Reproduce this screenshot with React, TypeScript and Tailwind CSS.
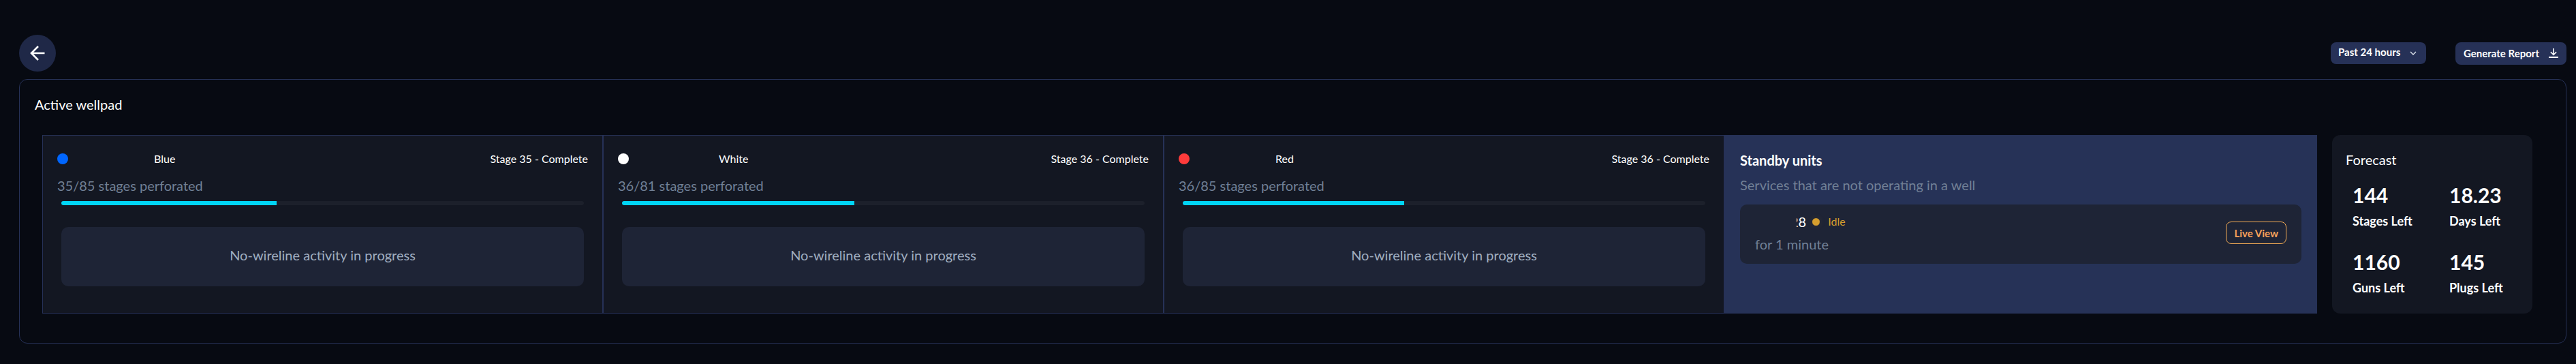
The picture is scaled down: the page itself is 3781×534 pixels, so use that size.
import { useState } from 'react';

const wells = [
  { name: "Blue", dot: "bg-[#0066ff]", nameGap: "ml-[126px]", stage: 35, done: 35, total: 85 },
  { name: "White", dot: "bg-white", nameGap: "ml-[132px]", stage: 36, done: 36, total: 81 },
  { name: "Red", dot: "bg-[#ff3b3b]", nameGap: "ml-[126px]", stage: 36, done: 36, total: 85 },
];

const forecast = [
  { value: "144", label: "Stages Left" },
  { value: "18.23", label: "Days Left" },
  { value: "1160", label: "Guns Left" },
  { value: "145", label: "Plugs Left" },
];

function BackButton() {
  return (
    <button
      type="button"
      aria-label="Back"
      className="flex h-[54px] w-[54px] items-center justify-center rounded-full bg-[#1f2847]"
    >
      <svg width="22" height="22" viewBox="0 0 22 22" fill="none" stroke="#fff" strokeWidth="2.6">
        <path d="M21.5 11H2M12 1L2 11l10 10" />
      </svg>
    </button>
  );
}

function RangeSelect() {
  const [range, setRange] = useState("24");

  return (
    <div className="relative">
      <select
        aria-label="Time range"
        value={range}
        onChange={(e) => setRange(e.target.value)}
        className="block h-8 w-[140px] appearance-none rounded-lg bg-[#263157] pb-1 pl-[11px] text-[15px] leading-6 font-bold text-white"
      >
        <option value="24">Past 24 hours</option>
        <option value="48">Past 48 hours</option>
        <option value="168">Past 7 days</option>
      </select>
      <svg
        className="pointer-events-none absolute top-3 right-3.5"
        width="10"
        height="8"
        viewBox="0 0 10 8"
        fill="none"
        stroke="#e2e8f0"
        strokeWidth="1.3"
      >
        <path d="M1 2l4 4 4-4" />
      </svg>
    </div>
  );
}

function ReportButton() {
  return (
    <button
      type="button"
      className="flex h-[33px] items-center gap-3.5 rounded-lg bg-[#263157] px-3 text-[15px] leading-6 font-bold text-white"
    >
      Generate Report
      <svg width="14" height="14" viewBox="0 0 14 14" fill="none" stroke="#fff">
        <path d="M7 0v9M2.8 5.2L7 9.4l4.2-4.2" strokeWidth="1.6" />
        <path d="M0 13h14" strokeWidth="2" />
      </svg>
    </button>
  );
}

function WellPanel({ well }: { well: (typeof wells)[number] }) {
  return (
    <div className="border border-[#263157] bg-[#131722] px-[21px] pt-[22px] pb-[39px]">
      <div className="flex items-center text-base leading-6 text-white">
        <span className={`h-4 w-4 rounded-full ${well.dot}`} />
        <span className={well.nameGap}>{well.name}</span>
        <span className="ml-auto">Stage {well.stage} - Complete</span>
      </div>
      <p className="mt-[13px] text-xl leading-7 text-[#718096]">
        {well.done}/{well.total} stages perforated
      </p>
      <div className="mx-1.5 mt-[9px] h-1.5 overflow-hidden rounded-full bg-[#1c202b]">
        <div className="h-full bg-[#00d5f5]" style={{ width: `${(well.done / well.total) * 100}%` }} />
      </div>
      <div className="mx-1.5 mt-8 rounded-[10px] bg-[#1e2436] pt-[27px] pb-8 text-center text-xl leading-7 text-[#a0aec0]">
        No-wireline activity in progress
      </div>
    </div>
  );
}

function StandbyPanel() {
  return (
    <div className="border border-[#263157] bg-[#263257] px-[22px] pt-[22px]">
      <h3 className="text-xl leading-7 font-bold text-white">Standby units</h3>
      <p className="mt-2 text-xl leading-7 text-[#718096]">Services that are not operating in a well</p>
      <div className="mt-[15px] flex items-center justify-between rounded-[10px] bg-[#1e2436] px-[22px] pt-[11px] pb-[15px]">
        <div>
          <div className="flex items-center text-xl leading-7">
            <span className="relative ml-[52px] text-white">
              28
              <span className="absolute inset-y-0 left-0 w-[9px] bg-[#1e2436]" />
            </span>
            <span className="ml-[9px] h-[11px] w-[11px] rounded-full bg-[#d69e2e] shadow-[0_0_10px_#d69e2e22]" />
            <span className="ml-3 text-base text-[#d69e2e]">Idle</span>
          </div>
          <p className="mt-[5px] text-xl leading-7 text-[#718096]">for 1 minute</p>
        </div>
        <button
          type="button"
          className="h-[33px] rounded-lg border border-[#f6ad55] px-[11px] text-[15px] leading-6 font-bold text-[#f6a05a]"
        >
          Live View
        </button>
      </div>
    </div>
  );
}

function ForecastPanel() {
  return (
    <div className="w-[294px] shrink-0 rounded-xl bg-[#131722] px-5 pt-[22px]">
      <h3 className="text-xl leading-7 text-white">Forecast</h3>
      <dl className="mt-5 ml-2.5 grid grid-cols-[142px_1fr] gap-y-[30px] font-bold text-white">
        {forecast.map((item) => (
          <div key={item.label} className="flex flex-col-reverse gap-2">
            <dt className="text-lg leading-6">{item.label}</dt>
            <dd className="text-3xl leading-9">{item.value}</dd>
          </div>
        ))}
      </dl>
    </div>
  );
}

export default function App() {
  return (
    <div className="min-h-screen bg-[#070a12] pt-[51px] pr-3.5 pb-[30px] pl-7 font-['Lato',sans-serif]">
      <header className="flex items-center justify-between">
        <BackButton />
        <div className="flex items-start gap-[43px]">
          <RangeSelect />
          <ReportButton />
        </div>
      </header>

      <main className="mt-[11px] rounded-xl border border-[#263157] pt-[22px] pb-[43px]">
        <h2 className="pl-[22px] text-xl leading-7 text-white">Active wellpad</h2>
        <div className="mt-[31px] flex gap-[22px] pr-[49px] pl-[33px]">
          <section className="grid h-[262px] flex-1 grid-cols-[823fr_823fr_823fr_870fr]">
            {wells.map((well) => (
              <WellPanel key={well.name} well={well} />
            ))}
            <StandbyPanel />
          </section>
          <ForecastPanel />
        </div>
      </main>
    </div>
  );
}
